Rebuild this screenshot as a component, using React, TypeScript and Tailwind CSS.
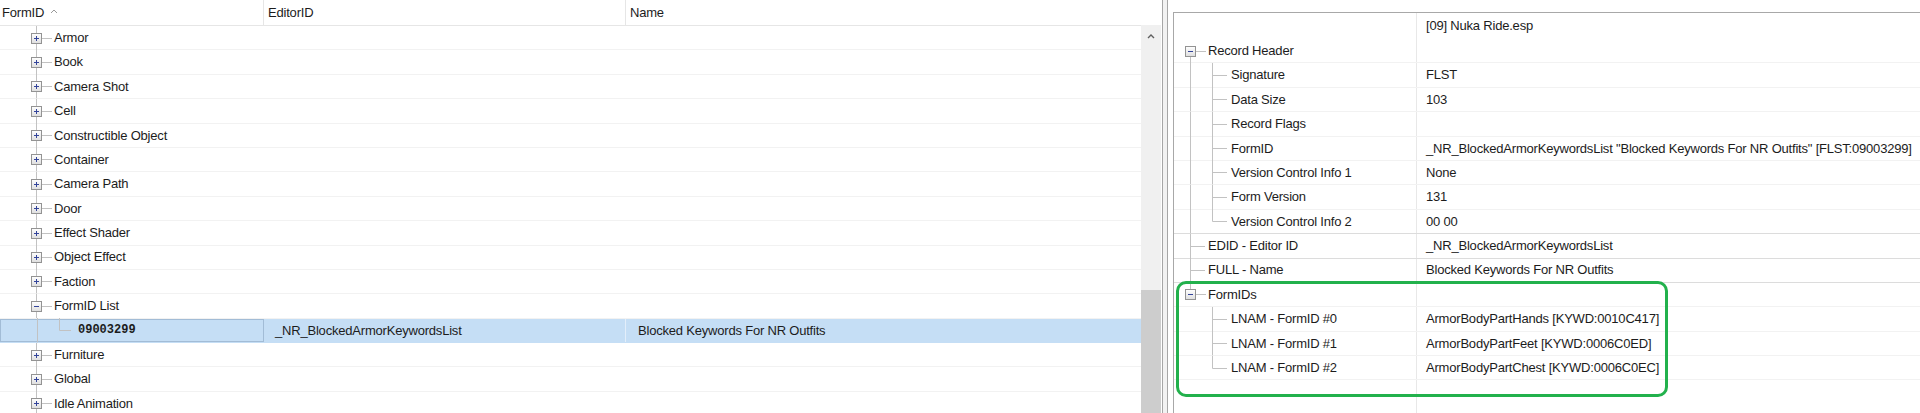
import React from 'react'

const ROW_H = 24.4
const LINE = '#c2c2c2'

type LeftRow = {
    label: string
    kind: 'plus' | 'minus' | 'child'
    editorId?: string
    name?: string
    selected?: boolean
}

const leftRows: LeftRow[] = [
    { label: 'Armor', kind: 'plus' },
    { label: 'Book', kind: 'plus' },
    { label: 'Camera Shot', kind: 'plus' },
    { label: 'Cell', kind: 'plus' },
    { label: 'Constructible Object', kind: 'plus' },
    { label: 'Container', kind: 'plus' },
    { label: 'Camera Path', kind: 'plus' },
    { label: 'Door', kind: 'plus' },
    { label: 'Effect Shader', kind: 'plus' },
    { label: 'Object Effect', kind: 'plus' },
    { label: 'Faction', kind: 'plus' },
    { label: 'FormID List', kind: 'minus' },
    {
        label: '09003299',
        kind: 'child',
        editorId: '_NR_BlockedArmorKeywordsList',
        name: 'Blocked Keywords For NR Outfits',
        selected: true,
    },
    { label: 'Furniture', kind: 'plus' },
    { label: 'Global', kind: 'plus' },
    { label: 'Idle Animation', kind: 'plus' },
]

type RightRow = {
    label: string
    value?: string
    level: 1 | 2
    root: 'full' | 'top' | 'below' | 'none'
    box?: boolean
    child?: 'full' | 'top'
    dark?: boolean
}

const rightRows: RightRow[] = [
    { label: 'Record Header', level: 1, root: 'below', box: true },
    { label: 'Signature', value: 'FLST', level: 2, root: 'full', child: 'full' },
    { label: 'Data Size', value: '103', level: 2, root: 'full', child: 'full' },
    { label: 'Record Flags', level: 2, root: 'full', child: 'full' },
    {
        label: 'FormID',
        value: '_NR_BlockedArmorKeywordsList "Blocked Keywords For NR Outfits" [FLST:09003299]',
        level: 2,
        root: 'full',
        child: 'full',
    },
    { label: 'Version Control Info 1', value: 'None', level: 2, root: 'full', child: 'full' },
    { label: 'Form Version', value: '131', level: 2, root: 'full', child: 'full' },
    { label: 'Version Control Info 2', value: '00 00', level: 2, root: 'full', child: 'top', dark: true },
    { label: 'EDID - Editor ID', value: '_NR_BlockedArmorKeywordsList', level: 1, root: 'full', dark: true },
    { label: 'FULL - Name', value: 'Blocked Keywords For NR Outfits', level: 1, root: 'full', dark: true },
    { label: 'FormIDs', level: 1, root: 'top', box: true },
    { label: 'LNAM - FormID #0', value: 'ArmorBodyPartHands [KYWD:0010C417]', level: 2, root: 'none', child: 'full' },
    { label: 'LNAM - FormID #1', value: 'ArmorBodyPartFeet [KYWD:0006C0ED]', level: 2, root: 'none', child: 'full' },
    { label: 'LNAM - FormID #2', value: 'ArmorBodyPartChest [KYWD:0006C0EC]', level: 2, root: 'none', child: 'top' },
]

// small +/- expander box, left/top at x,y, 11px square
function Expander({ x, y, open }: { x: number; y: number; open: boolean }) {
    return (
        <g>
            <rect x={x + 0.5} y={y + 0.5} width={10} height={10} fill="url(#exp)" stroke="#939393" />
            <line x1={x + 3} y1={y + 5.5} x2={x + 8} y2={y + 5.5} stroke="#33449a" />
            {!open && <line x1={x + 5.5} y1={y + 3} x2={x + 5.5} y2={y + 8} stroke="#33449a" />}
        </g>
    )
}

function GradDefs() {
    return (
        <defs>
            <linearGradient id="exp" x1="0" y1="0" x2="0" y2="1">
                <stop offset="0" stopColor="#ffffff" />
                <stop offset="1" stopColor="#dedede" />
            </linearGradient>
        </defs>
    )
}

function LeftGlyph({ kind }: { kind: LeftRow['kind'] }) {
    const w = kind === 'child' ? 77 : 54
    return (
        <svg width={w} height={ROW_H} className="shrink-0">
            <GradDefs />
            <line x1={36.5} y1={0} x2={36.5} y2={ROW_H} stroke={LINE} />
            {kind === 'child' ? (
                <>
                    <line x1={58.5} y1={0} x2={58.5} y2={12.5} stroke={LINE} />
                    <line x1={58.5} y1={12.5} x2={70} y2={12.5} stroke={LINE} />
                </>
            ) : (
                <>
                    <line x1={42} y1={12.5} x2={52} y2={12.5} stroke={LINE} />
                    <Expander x={31} y={7} open={kind === 'minus'} />
                </>
            )}
        </svg>
    )
}

function RightGlyph({ row }: { row: RightRow }) {
    const w = row.level === 2 ? 57 : 34
    return (
        <svg width={w} height={ROW_H} className="shrink-0">
            <GradDefs />
            {row.root === 'full' && <line x1={16.5} y1={0} x2={16.5} y2={ROW_H} stroke={LINE} />}
            {row.root === 'top' && <line x1={16.5} y1={0} x2={16.5} y2={7} stroke={LINE} />}
            {row.root === 'below' && <line x1={16.5} y1={18} x2={16.5} y2={ROW_H} stroke={LINE} />}
            {row.level === 1 && !row.box && <line x1={16.5} y1={12.5} x2={31} y2={12.5} stroke={LINE} />}
            {row.box && (
                <>
                    <line x1={22} y1={12.5} x2={32} y2={12.5} stroke={LINE} />
                    <Expander x={11} y={7} open />
                </>
            )}
            {row.child === 'full' && <line x1={38.5} y1={0} x2={38.5} y2={ROW_H} stroke={LINE} />}
            {row.child === 'top' && <line x1={38.5} y1={0} x2={38.5} y2={12.5} stroke={LINE} />}
            {row.level === 2 && <line x1={38.5} y1={12.5} x2={53} y2={12.5} stroke={LINE} />}
        </svg>
    )
}

function LeftPanel() {
    return (
        <div className="flex w-[1141px] shrink-0 flex-col">
            <div className="flex h-[26px] shrink-0 border-b border-[#e6e6e6]">
                <div className="flex w-[264px] items-center border-r border-[#e6e6e6] pl-[2px]">
                    <span>FormID</span>
                    <svg width={8} height={5} className="ml-[6px] mb-[3px]">
                        <path d="M1 4 L4 1 L7 4" fill="none" stroke="#9a9a9a" />
                    </svg>
                </div>
                <div className="flex w-[362px] items-center border-r border-[#e6e6e6] pl-[4px]">EditorID</div>
                <div className="flex flex-1 items-center pl-[4px]">Name</div>
            </div>

            {leftRows.map((row, i) => (
                <div
                    key={i}
                    className={`flex h-[24.4px] shrink-0 border-b ${
                        row.selected ? 'border-[#c5def5] bg-[#c5def5]' : 'border-[#f2f2f2]'
                    }`}
                >
                    <div
                        className={`flex w-[264px] items-center ${
                            row.selected ? 'border border-[#a2bcd6]' : ''
                        }`}
                    >
                        <LeftGlyph kind={row.kind} />
                        <span
                            className={
                                row.kind === 'child'
                                    ? "font-['Liberation_Mono',monospace] text-[12px] font-bold tracking-normal"
                                    : ''
                            }
                        >
                            {row.label}
                        </span>
                    </div>
                    <div
                        className={`flex w-[362px] items-center pl-[11px] ${
                            row.selected ? 'border-r border-[#e3eefa]' : ''
                        }`}
                    >
                        {row.editorId}
                    </div>
                    <div className="flex flex-1 items-center pl-[12px]">{row.name}</div>
                </div>
            ))}
        </div>
    )
}

function Scrollbar() {
    return (
        <div className="flex w-[20px] shrink-0 flex-col">
            <div className="h-[25px] shrink-0 bg-white" />
            <div className="flex flex-1 flex-col bg-[#f0f0f0]">
                <div className="flex h-[22px] items-center justify-center">
                    <svg width={8} height={6}>
                        <path d="M1 5 L4 2 L7 5" fill="none" stroke="#5f5f5f" strokeWidth={1.4} />
                    </svg>
                </div>
                <div className="flex-1" />
                <div className="h-[123px] bg-[#cdcdcd]" />
            </div>
        </div>
    )
}

function Splitter() {
    return (
        <div className="flex w-[12px] shrink-0">
            <div className="w-px bg-white" />
            <div className="w-px bg-[#a6a6a6]" />
            <div className="w-[4px] bg-[#f2f2f2]" />
            <div className="w-px bg-[#a6a6a6]" />
            <div className="w-[5px] bg-white" />
        </div>
    )
}

function RightPanel() {
    return (
        <div className="flex min-w-0 flex-1 flex-col pt-[12px]">
            <div className="flex flex-1 flex-col border-l border-t border-[#a8a8a8]">
                <div className="flex h-[26px] shrink-0">
                    <div className="w-[243px] shrink-0 border-r border-[#e8e8e8]" />
                    <div className="flex items-center pl-[9px]">[09] Nuka Ride.esp</div>
                </div>
                {rightRows.map((row, i) => (
                    <div
                        key={i}
                        className={`flex h-[24.4px] shrink-0 border-b ${
                            row.dark ? 'border-[#dcdcdc]' : 'border-[#f2f2f2]'
                        }`}
                    >
                        <div className="flex w-[243px] shrink-0 items-center border-r border-[#e8e8e8]">
                            <RightGlyph row={row} />
                            <span>{row.label}</span>
                        </div>
                        <div className="flex min-w-0 flex-1 items-center whitespace-nowrap pl-[9px]">{row.value}</div>
                    </div>
                ))}
                <div className="flex flex-1">
                    <div className="w-[243px] shrink-0 border-r border-[#e8e8e8]" />
                </div>
            </div>
        </div>
    )
}

export default function App() {
    return (
        <div className="relative flex h-[413px] w-[1920px] overflow-hidden bg-white font-['Liberation_Sans',Arial,sans-serif] text-[13px] tracking-[-0.2px] text-[#1c1c1c]">
            <LeftPanel />
            <Scrollbar />
            <Splitter />
            <RightPanel />
            {/* green highlight round the FormIDs block */}
            <div className="pointer-events-none absolute left-[1176px] top-[281px] h-[116px] w-[492px] rounded-[10px] border-[3px] border-[#22b14c]" />
        </div>
    )
}
